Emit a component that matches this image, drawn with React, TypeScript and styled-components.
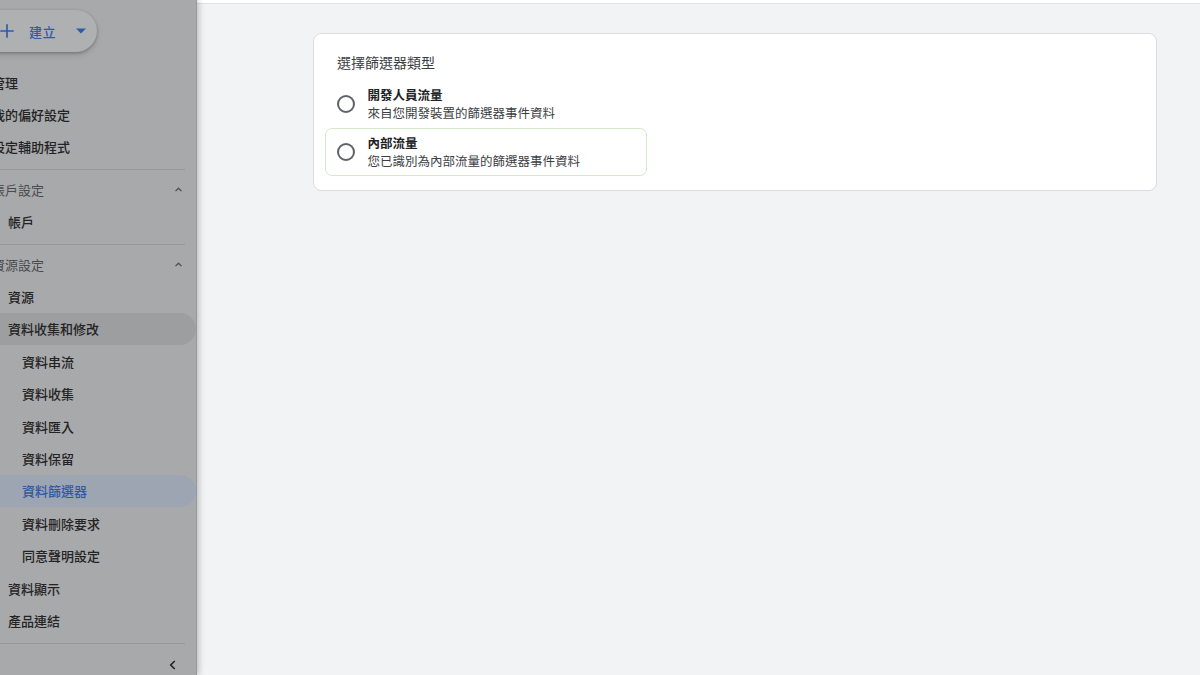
import React from 'react'
import styled, { createGlobalStyle } from 'styled-components'

const GlobalStyle = createGlobalStyle`
  html, body {
    margin: 0;
    padding: 0;
    height: 100%;
    overflow: hidden;
  }
  body {
    font-family: "Noto Sans CJK TC", "Noto Sans", Roboto, sans-serif;
  }
  #root {
    height: 100%;
  }
`

type NavEntry =
  | { kind: 'item'; label: string; level: 0 | 1 | 2; active?: boolean; selected?: boolean }
  | { kind: 'header'; label: string }
  | { kind: 'divider' }

const navEntries: NavEntry[] = [
  { kind: 'item', label: '管理', level: 0 },
  { kind: 'item', label: '我的偏好設定', level: 0 },
  { kind: 'item', label: '設定輔助程式', level: 0 },
  { kind: 'divider' },
  { kind: 'header', label: '帳戶設定' },
  { kind: 'item', label: '帳戶', level: 1 },
  { kind: 'divider' },
  { kind: 'header', label: '資源設定' },
  { kind: 'item', label: '資源', level: 1 },
  { kind: 'item', label: '資料收集和修改', level: 1, active: true },
  { kind: 'item', label: '資料串流', level: 2 },
  { kind: 'item', label: '資料收集', level: 2 },
  { kind: 'item', label: '資料匯入', level: 2 },
  { kind: 'item', label: '資料保留', level: 2 },
  { kind: 'item', label: '資料篩選器', level: 2, selected: true },
  { kind: 'item', label: '資料刪除要求', level: 2 },
  { kind: 'item', label: '同意聲明設定', level: 2 },
  { kind: 'item', label: '資料顯示', level: 1 },
  { kind: 'item', label: '產品連結', level: 1 },
]

const filterTypes = [
  { title: '開發人員流量', desc: '來自您開發裝置的篩選器事件資料', focused: false },
  { title: '內部流量', desc: '您已識別為內部流量的篩選器事件資料', focused: true },
]

const levelIndent = { 0: 16, 1: 32, 2: 46 }

const ChevronUp = () => (
  <svg width="13" height="13" viewBox="0 0 24 24">
    <path d="M6.5 15l5.5-5.5 5.5 5.5" fill="none" stroke="#505254" strokeWidth="2.6" />
  </svg>
)

export default function App() {
  return (
    <>
      <GlobalStyle />
      <Page>
        <Sidebar>
          <NavScroll>
            <CreateButton>
              <PlusIcon viewBox="0 0 24 24">
                <path d="M12 3v18M3 12h18" stroke="#2f5aa8" strokeWidth="2.2" />
              </PlusIcon>
              <CreateLabel>建立</CreateLabel>
              <svg width="10" height="6" viewBox="0 0 10 5">
                <path d="M0 0h10L5 5z" fill="#2f5aa8" />
              </svg>
            </CreateButton>
            <NavList>
              {navEntries.map((entry, i) => {
                if (entry.kind === 'divider') return <Divider key={i} />
                if (entry.kind === 'header')
                  return (
                    <SectionHeader key={i}>
                      <span>{entry.label}</span>
                      <ChevronUp />
                    </SectionHeader>
                  )
                return (
                  <NavItem
                    key={i}
                    $indent={levelIndent[entry.level]}
                    $active={entry.active}
                    $selected={entry.selected}
                  >
                    {entry.label}
                  </NavItem>
                )
              })}
            </NavList>
            <Divider />
            <CollapseRow>
              <svg width="14" height="14" viewBox="0 0 24 24">
                <path d="M15 5l-7 7 7 7" fill="none" stroke="#1f1f20" strokeWidth="2.6" />
              </svg>
            </CollapseRow>
          </NavScroll>
        </Sidebar>
        <Main>
          <TopStrip />
          <Content>
            <Card>
              <CardTitle>選擇篩選器類型</CardTitle>
              <Options>
                {filterTypes.map((t) => (
                  <Option key={t.title} $focused={t.focused}>
                    <Radio />
                    <OptionText>
                      <OptionTitle>{t.title}</OptionTitle>
                      <OptionDesc>{t.desc}</OptionDesc>
                    </OptionText>
                  </Option>
                ))}
              </Options>
            </Card>
          </Content>
        </Main>
      </Page>
    </>
  )
}

const Page = styled.div`
  display: flex;
  width: 1200px;
  height: 675px;
  background: #f1f3f4;
`

const Sidebar = styled.aside`
  position: relative;
  z-index: 1;
  width: 196px;
  flex-shrink: 0;
  overflow: hidden;
  background: #a8a9ab;
  box-shadow: 1px 0 0 #97989a, 3px 0 6px rgba(0, 0, 0, 0.22);
`

const NavScroll = styled.div`
  display: flex;
  flex-direction: column;
  width: 220px;
  margin-left: -24px;
`

const CreateButton = styled.div`
  display: flex;
  align-items: center;
  width: 121px;
  height: 42px;
  margin-top: 10px;
  box-sizing: border-box;
  padding-left: 22px;
  border-radius: 0 21px 21px 0;
  background: #afb0b2;
  box-shadow: 0 1px 3px rgba(0, 0, 0, 0.25), 0 3px 6px rgba(0, 0, 0, 0.12);
`

const PlusIcon = styled.svg`
  width: 18px;
  height: 18px;
  margin-right: 13px;
`

const CreateLabel = styled.span`
  font-size: 13px;
  font-weight: 500;
  color: #2f5aa8;
  letter-spacing: 0.5px;
  margin-right: 20px;
`

const NavList = styled.nav`
  display: flex;
  flex-direction: column;
  margin-top: 14px;
`

const NavItem = styled.div<{ $indent: number; $active?: boolean; $selected?: boolean }>`
  display: flex;
  align-items: center;
  height: 32.4px;
  width: 220px;
  box-sizing: border-box;
  padding-left: ${(p) => p.$indent}px;
  font-size: 13px;
  font-weight: 500;
  color: ${(p) => (p.$selected ? '#2f59a3' : '#232324')};
  background: ${(p) => (p.$selected ? '#9da4b2' : p.$active ? '#9d9ea0' : 'transparent')};
  border-radius: 0 16px 16px 0;
`

const SectionHeader = styled.div`
  display: flex;
  align-items: center;
  justify-content: space-between;
  height: 32.4px;
  width: 209px;
  box-sizing: border-box;
  padding-left: 16px;
  font-size: 13px;
  color: #4a4b4d;
`

const Divider = styled.div`
  height: 1px;
  width: 209px;
  margin: 6px 0 3px;
  background: #97989a;
`

const CollapseRow = styled.div`
  display: flex;
  justify-content: flex-end;
  align-items: center;
  height: 34px;
  width: 204px;
  margin-top: 1px;
`

const Main = styled.main`
  flex: 1;
  display: flex;
  flex-direction: column;
`

const TopStrip = styled.div`
  height: 3px;
  background: #ffffff;
  border-bottom: 1px solid #dfe1e4;
`

const Content = styled.div`
  padding: 29px 43px 0 117px;
`

const Card = styled.section`
  box-sizing: border-box;
  height: 158px;
  background: #ffffff;
  border: 1px solid #dadce0;
  border-radius: 8px;
  padding: 18px 12px 14px 11px;
`

const CardTitle = styled.div`
  font-size: 14px;
  line-height: 20px;
  color: #3c4043;
  padding-left: 12px;
`

const Options = styled.div`
  display: flex;
  flex-direction: column;
  margin-top: 8px;
`

const Option = styled.div<{ $focused?: boolean }>`
  display: flex;
  align-items: center;
  gap: 13px;
  width: 322px;
  height: 48px;
  box-sizing: border-box;
  padding-left: 10.5px;
  border: 1.5px solid ${(p) => (p.$focused ? '#d6e8cc' : 'transparent')};
  border-radius: 7px;
`

const Radio = styled.span`
  width: 14px;
  height: 14px;
  flex-shrink: 0;
  border: 2px solid #5f6368;
  border-radius: 50%;
`

const OptionText = styled.div`
  display: flex;
  flex-direction: column;
`

const OptionTitle = styled.span`
  font-size: 12.5px;
  line-height: 18px;
  font-weight: 600;
  color: #202124;
`

const OptionDesc = styled.span`
  font-size: 12.5px;
  line-height: 18px;
  color: #3c4043;
`
